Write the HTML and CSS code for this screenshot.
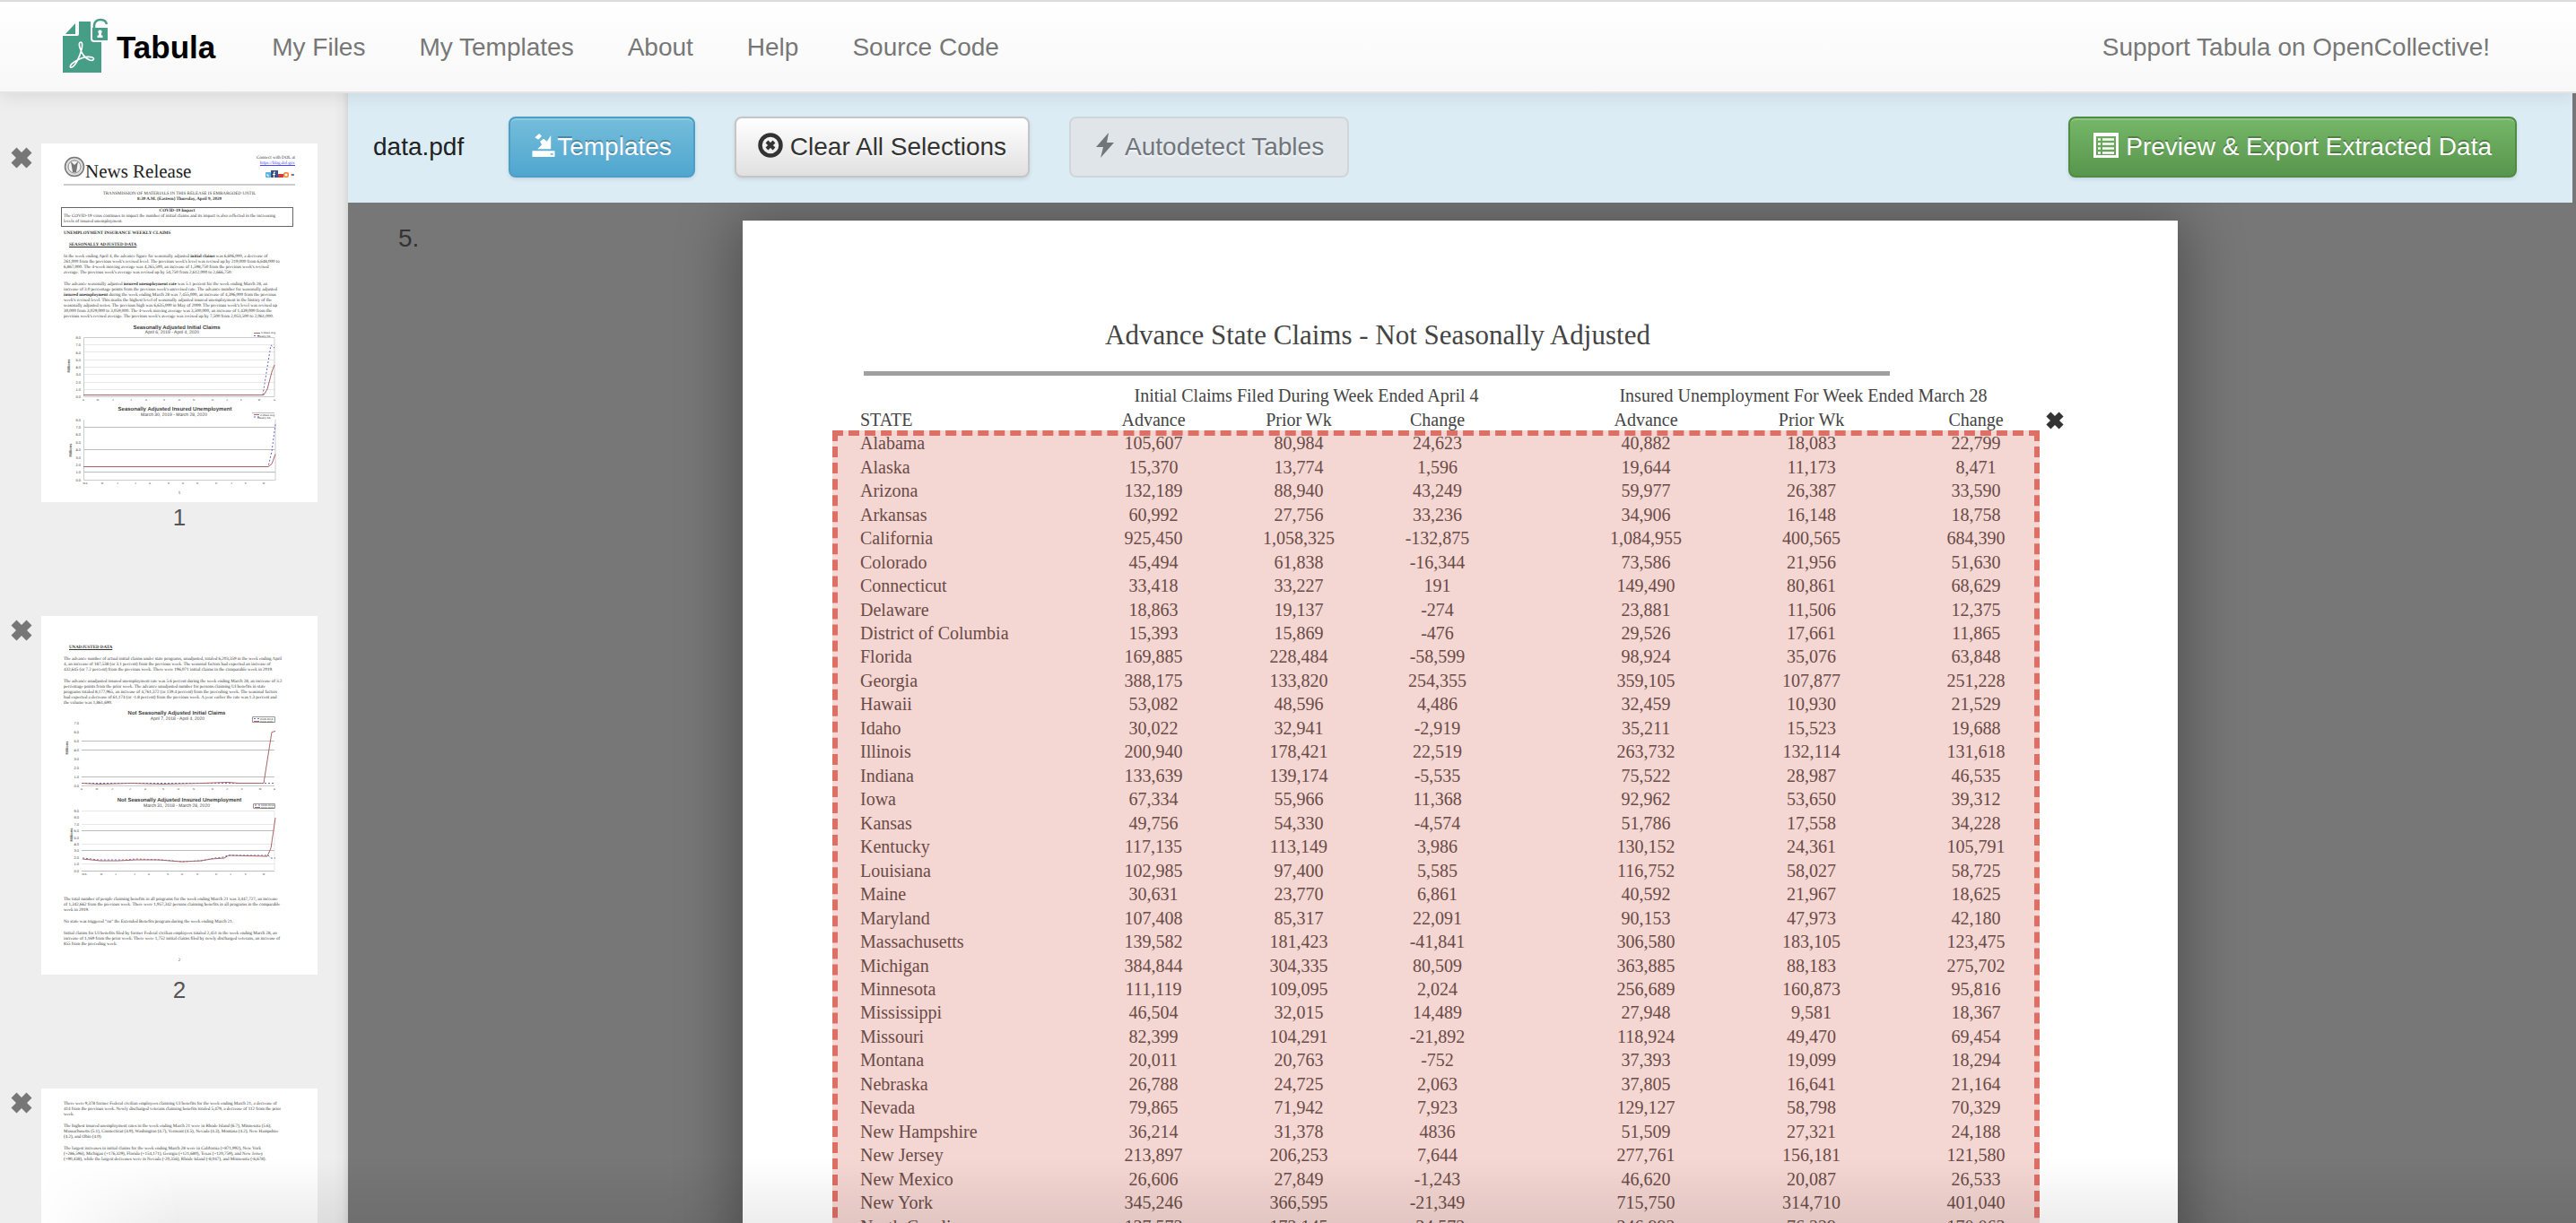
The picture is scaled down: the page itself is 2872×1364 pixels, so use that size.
FILE: index.html
```html
<!DOCTYPE html>
<html lang="en">
<head>
<meta charset="utf-8">
<title>Tabula - data.pdf</title>
<link rel="stylesheet" href="styles.css">
</head>
<body>
<svg class="defs" aria-hidden="true">
  <symbol id="cross" viewBox="0 0 24 24"><path d="M6.5 .5L12 6l5.500-5.500L23.500 6.500 18 12l5.500 5.500-6 6L12 18l-5.500 5.500-6-6L6 12 .5 6.500z"/></symbol>
</svg>
<header class="navbar">
  <a class="brand" href="#">
    <svg class="logo" viewBox="70 20 52 64" aria-hidden="true">
      <path fill="#479e86" d="M88 25h13v19q0 4 4 4h8v34H70V41h16q2 0 2-2zM84 27v12H73z"/>
      <path fill="#479e86" d="M103 32h17v14h-15q-2 0-2-2z"/>
      <path fill="none" stroke="#479e86" stroke-width="2.500" d="M105 32v-3q1-6 7-6 6 0 7 5"/>
      <path fill="#fff" d="M111.500 34.500a2 2 0 0 1 1.500 3.500v2.500h1.500V43h-6v-2.500h1.500V38a2 2 0 0 1 1.500-3.500zM107 31q1-4 4.500-4 3 0 4.500 2h-6v2z"/>
      <path fill="none" stroke="#fff" stroke-width="1.700" d="M90 48c-2 0-2 3-1 6 2 7 6 12 11 14 4 1.500 6-2 3-3-5-1.500-13 .5-20 5-5 3-6 7-3 6 4-1 9-12 11-20 1-4 1-8-1-8z"/>
    </svg>
    <span>Tabula</span>
  </a>
  <nav class="links">
    <a href="#">My Files</a>
    <a href="#">My Templates</a>
    <a href="#">About</a>
    <a href="#">Help</a>
    <a href="#">Source Code</a>
  </nav>
  <a class="support" href="#">Support Tabula on OpenCollective!</a>
</header>

<div class="workspace">
  <aside class="sidebar">
    <ol class="thumbs">
      <li class="thumb">
        <button class="remove" aria-label="Remove page 1"><svg><use href="#cross"/></svg></button>
        <a class="sheet" href="#page1">
          <div class="masthead">
            <svg class="seal" viewBox="0 0 24 24" aria-hidden="true"><circle cx="12" cy="12" r="10.500" fill="#ddd" stroke="#777" stroke-width="1.500"/><circle cx="12" cy="12" r="7" fill="#f4f4f4" stroke="#888" stroke-width="1"/><path d="M8 6l4 4 4-4-1 6-1 6h-4l-1-6z" fill="#777"/></svg>
            <span class="release">News Release</span>
            <span class="connect">Connect with DOL at<br><u>https://blog.dol.gov</u>
              <svg viewBox="0 0 34 9" aria-hidden="true"><rect x="1" y="2" width="6" height="6" rx="1" fill="#59b4e4"/><path d="M3 4v2h2" stroke="#fff" fill="none"/><rect x="7" y="0" width="8" height="8" fill="#3b5484"/><path d="M12 2h-1.500v6M9 4.500h3" stroke="#fff" fill="none"/><rect x="15" y="4" width="6" height="4" fill="#c9413e"/><rect x="21" y="2" width="6" height="6" rx="2" fill="#f28b3c"/><circle cx="24" cy="5" r="1.500" fill="#fff"/><circle cx="30.500" cy="5" r="1" fill="#e33"/><circle cx="32" cy="5" r="1" fill="#36c"/></svg>
            </span>
          </div>
          <p class="center gap7">TRANSMISSION OF MATERIALS IN THIS RELEASE IS EMBARGOED UNTIL<br><b>8:30 A.M. (Eastern) Thursday, April 9, 2020</b></p>
          <div class="impact"><b>COVID-19 Impact</b>The COVID-19 virus continues to impact the number of initial claims and its impact is also reflected in the increasing<br>levels of insured unemployment.</div>
          <p class="gap5"><b>UNEMPLOYMENT INSURANCE WEEKLY CLAIMS</b></p>
          <p class="gap7 sub"><b>SEASONALLY ADJUSTED DATA</b></p>
          <p class="gap7">In the week ending April 4, the advance figure for seasonally adjusted <b>initial claims</b> was 6,606,000, a decrease of<br>261,000 from the previous week's revised level. The previous week's level was revised up by 219,000 from 6,648,000 to<br>6,867,000. The 4-week moving average was 4,265,500, an increase of 1,598,750 from the previous week's revised<br>average. The previous week's average was revised up by 54,750 from 2,612,000 to 2,666,750.</p>
          <p class="gap7">The advance seasonally adjusted <b>insured unemployment rate</b> was 5.1 percent for the week ending March 28, an<br>increase of 3.0 percentage points from the previous week's unrevised rate. The advance number for seasonally adjusted<br><b>insured unemployment</b> during the week ending March 28 was 7,455,000, an increase of 4,396,000 from the previous<br>week's revised level. This marks the highest level of seasonally adjusted insured unemployment in the history of the<br>seasonally adjusted series. The previous high was 6,635,000 in May of 2009. The previous week's level was revised up<br>30,000 from 3,029,000 to 3,059,000. The 4-week moving average was 3,500,000, an increase of 1,439,000 from the<br>previous week's revised average. The previous week's average was revised up by 7,500 from 2,053,500 to 2,061,000.</p>
          <svg class="charts" viewBox="46 357 308 186">
            <text class="t" x="197" y="367">Seasonally Adjusted Initial Claims</text>
            <text class="s" x="192" y="372">April 6, 2019 - April 4, 2020</text>
            <path class="faint" d="M93 384.500h213M93 392.500h213M93 401.500h213M93 409.500h213M93 417.500h213M93 426.500h213M93 434.500h213"/>
            <path class="axis" d="M93.500 442.500V376.500H306V442.500z"/>
            <g class="n"><text x="90" y="378">8.0</text><text x="90" y="386">7.0</text><text x="90" y="395">6.0</text><text x="90" y="403">5.0</text><text x="90" y="411">4.0</text><text x="90" y="419">3.0</text><text x="90" y="428">2.0</text><text x="90" y="436">1.0</text><text x="90" y="444">0.0</text></g>
            <text class="m" x="78" y="408" transform="rotate(-90 78 408)">Millions</text>
            <g class="x"><text x="93" y="447">A</text><text x="109" y="447">M</text><text x="126" y="447">J</text><text x="146" y="447">J</text><text x="163" y="447">A</text><text x="183" y="447">S</text><text x="200" y="447">O</text><text x="216" y="447">N</text><text x="237" y="447">D</text><text x="253" y="447">J</text><text x="269" y="447">F</text><text x="289" y="447">M</text><text x="306" y="447">A</text></g>
            <path class="blue" d="M93 440.500H293L302 385l4 3"/><path class="red" d="M93 440.500H294L298 434 303 415 306 407"/>
            <path class="red" d="M283 371.500h7"/><path class="blue" d="M283 374.500h7"/><text class="l" x="291" y="372">4-Week Avg</text><text class="l" x="287" y="376">Weekly SA</text>
            <text class="t" x="195" y="458">Seasonally Adjusted Insured Unemployment</text>
            <text class="s" x="194" y="464">March 30, 2019 - March 28, 2020</text>
            <path class="strong" d="M93 476.500h214M93 501.500h214M93 526.500h214"/>
            <path class="axis" d="M93.500 468v67.500H307V468"/>
            <g class="n"><text x="90" y="470">8.0</text><text x="90" y="478">7.0</text><text x="90" y="486">6.0</text><text x="90" y="495">5.0</text><text x="90" y="503">4.0</text><text x="90" y="512">3.0</text><text x="90" y="520">2.0</text><text x="90" y="528">1.0</text><text x="90" y="537">0.0</text></g>
            <text class="m" x="80" y="502" transform="rotate(-90 80 502)">Millions</text>
            <g class="x"><text x="95" y="540">M A</text><text x="114" y="540">M</text><text x="131" y="540">J</text><text x="151" y="540">J</text><text x="167" y="540">A</text><text x="188" y="540">S</text><text x="204" y="540">O</text><text x="220" y="540">N</text><text x="241" y="540">D</text><text x="258" y="540">J</text><text x="274" y="540">F</text><text x="294" y="540">M</text></g>
            <path class="blue" d="M93 520.500H299l4-17 4-30"/><path class="red" d="M93 520.500H299l4-3 4-11"/>
            <path class="strong" d="M281 460.500h25"/><path class="red" d="M283 462.500h6"/><path class="blue" d="M283 465h6"/><text class="l" x="290" y="464">4-Week Avg</text><text class="l" x="287" y="467">Weekly SA</text>
          </svg>
          <p class="center gap5">1</p>
        </a>
        <span class="number">1</span>
      </li>
      <li class="thumb">
        <button class="remove" aria-label="Remove page 2"><svg><use href="#cross"/></svg></button>
        <a class="sheet second" href="#page2">
          <p class="sub"><b>UNADJUSTED DATA</b></p>
          <p class="gap7">The advance number of actual initial claims under state programs, unadjusted, totaled 6,203,359 in the week ending April<br>4, an increase of 187,538 (or 3.1 percent) from the previous week. The seasonal factors had expected an increase of<br>432,645 (or 7.2 percent) from the previous week. There were 196,071 initial claims in the comparable week in 2019.</p>
          <p class="gap7">The advance unadjusted insured unemployment rate was 5.6 percent during the week ending March 28, an increase of 3.2<br>percentage points from the prior week. The advance unadjusted number for persons claiming UI benefits in state<br>programs totaled 8,177,965, an increase of 4,761,372 (or 139.4 percent) from the preceding week. The seasonal factors<br>had expected a decrease of 61,174 (or -1.8 percent) from the previous week. A year earlier the rate was 1.3 percent and<br>the volume was 1,861,690.</p>
          <svg class="charts" viewBox="46 787 308 206">
            <text class="t" x="197" y="796">Not Seasonally Adjusted Initial Claims</text>
            <text class="s" x="198" y="802">April 7, 2018 - April 4, 2020</text>
            <path class="strong" d="M91 825.500h215M91 835.500h215M91 865.500h215"/><path class="axis" d="M91 875.500h215"/>
            <g class="n"><text x="88" y="807">7.0</text><text x="88" y="817">6.0</text><text x="88" y="827">5.0</text><text x="88" y="837">4.0</text><text x="88" y="847">3.0</text><text x="88" y="857">2.0</text><text x="88" y="867">1.0</text><text x="88" y="877">0.0</text></g>
            <text class="m" x="76" y="833" transform="rotate(-90 76 833)">Millions</text>
            <g class="x"><text x="91" y="880">A</text><text x="108" y="880">M</text><text x="125" y="880">J</text><text x="145" y="880">J</text><text x="162" y="880">A</text><text x="182" y="880">S</text><text x="199" y="880">O</text><text x="216" y="880">N</text><text x="237" y="880">D</text><text x="253" y="880">J</text><text x="270" y="880">F</text><text x="290" y="880">M</text><text x="306" y="880">A</text></g>
            <path class="blue" d="M91 872.500H306"/><path class="red" d="M91 872.500l20 1 35-1 35 1 45-1 28-1 12 1h28l9-57 4-1"/>
            <path class="box" d="M281.500 798.500h25v6h-25z"/><path class="blue" d="M283 800.500h6"/><path class="red" d="M283 803.500h6"/><text class="l" x="290" y="802">2018-2019</text><text class="l" x="290" y="805">2019-2020</text>
            <text class="t" x="200" y="893">Not Seasonally Adjusted Insured Unemployment</text>
            <text class="s" x="197" y="899">March 31, 2018 - March 28, 2020</text>
            <path class="strong" d="M91 925.500h215M91 947.500h215M91 970.500h215"/><path class="faint" d="M91 903.500h215v66M91 918.500h215M91 940.500h215M91 962.500h215"/>
            <g class="n"><text x="88" y="905">9.0</text><text x="88" y="912">8.0</text><text x="88" y="920">7.0</text><text x="88" y="927">6.0</text><text x="88" y="935">5.0</text><text x="88" y="942">4.0</text><text x="88" y="949">3.0</text><text x="88" y="957">2.0</text><text x="88" y="964">1.0</text><text x="88" y="972">0.0</text></g>
            <text class="m" x="81" y="930" transform="rotate(-90 81 930)">Millions</text>
            <g class="x"><text x="94" y="975">M A</text><text x="113" y="975">M</text><text x="129" y="975">J</text><text x="150" y="975">J</text><text x="166" y="975">A</text><text x="187" y="975">S</text><text x="203" y="975">O</text><text x="220" y="975">N</text><text x="241" y="975">D</text><text x="257" y="975">J</text><text x="274" y="975">F</text><text x="294" y="975">M</text></g>
            <path class="blue" d="M92 956l18 2 30 0 12-1 28 1 24 2 20-1 15-3 10-1 5-2h45l3 3h5"/><path class="red" d="M92 957l20 2 20 0 20-1 25 0 25 2 22-1 12-2 14-1 5-3 43 1 4-9 3-20 2-14"/>
            <path class="box" d="M282.500 895.500h24v5h-24z"/><path class="blue" d="M284 897h6"/><path class="red" d="M284 899.500h6"/><text class="l" x="291" y="898">2018-2019</text><text class="l" x="291" y="901">2019-2020</text>
          </svg>
          <p class="gap7">The total number of people claiming benefits in all programs for the week ending March 21 was 3,447,727, an increase<br>of 1,342,662 from the previous week. There were 1,957,342 persons claiming benefits in all programs in the comparable<br>week in 2019.</p>
          <p class="gap7">No state was triggered "on" the Extended Benefits program during the week ending March 21.</p>
          <p class="gap7">Initial claims for UI benefits filed by former Federal civilian employees totaled 2,451 in the week ending March 28, an<br>increase of 1,169 from the prior week. There were 1,752 initial claims filed by newly discharged veterans, an increase of<br>855 from the preceding week.</p>
          <p class="center gap12">2</p>
        </a>
        <span class="number">2</span>
      </li>
      <li class="thumb">
        <button class="remove" aria-label="Remove page 3"><svg><use href="#cross"/></svg></button>
        <a class="sheet third" href="#page3">
          <p>There were 9,378 former Federal civilian employees claiming UI benefits for the week ending March 21, a decrease of<br>414 from the previous week. Newly discharged veterans claiming benefits totaled 5,479, a decrease of 112 from the prior<br>week.</p>
          <p class="gap7">The highest insured unemployment rates in the week ending March 21 were in Rhode Island (6.7), Minnesota (5.6),<br>Massachusetts (5.1), Connecticut (4.9), Washington (4.7), Vermont (4.5), Nevada (4.3), Montana (4.2), New Hampshire<br>(4.2), and Ohio (4.0).</p>
          <p class="gap7">The largest increases in initial claims for the week ending March 28 were in California (+871,992), New York<br>(+286,596), Michigan (+176,329), Florida (+154,171), Georgia (+121,680), Texas (+120,759), and New Jersey<br>(+90,438), while the largest decreases were in Nevada (-20,356), Rhode Island (-8,047), and Minnesota (-6,678).</p>
        </a>
      </li>
    </ol>
  </aside>

  <main class="viewer">
    <div class="toolbar">
      <span class="filename">data.pdf</span>
      <button class="btn info"><svg class="tray" viewBox="0 0 26 29" aria-hidden="true"><path d="M0 21h26v7H0zM21.500 3v16H6l5-5-2-4 4-3 4 3zM3 5.500L8 1l3 3-4 4z" fill="currentColor"/><path d="M21 24h3v1.500h-3z" fill="#5aafd3"/></svg>Templates</button>
      <button class="btn"><svg class="ring" viewBox="0 0 28 28" aria-hidden="true"><circle cx="14" cy="14" r="11.500" fill="none" stroke="currentColor" stroke-width="4.500"/><path d="M10 10l8 8M18 10l-8 8" stroke="currentColor" stroke-width="4"/></svg>Clear All Selections</button>
      <button class="btn disabled" disabled><svg class="bolt" viewBox="0 0 20 28" aria-hidden="true"><path d="M14 0L0 16h8L5 28 20 11h-8z" fill="currentColor"/></svg>Autodetect Tables</button>
      <button class="btn success"><svg class="list" viewBox="0 0 28 28" aria-hidden="true"><path d="M0 0h28v28H0zM3 4v21h22V4z" fill="currentColor" fill-rule="evenodd"/><path d="M5 7.500h3M5 12.500h3M5 17.500h3M5 22.500h3M10 7.500h13M10 12.500h13M10 17.500h13M10 22.500h13" stroke="currentColor" stroke-width="2.500"/></svg>Preview &amp; Export Extracted Data</button>
    </div>
    <div class="canvas">
      <span class="pagenum">5.</span>
      <article class="page">
        <h1>Advance State Claims - Not Seasonally Adjusted</h1>
        <hr>
        <table class="claims">
          <colgroup><col class="c-state"><col class="c-a"><col class="c-b"><col class="c-c"><col class="c-gap"><col class="c-d"><col class="c-e"><col class="c-f"></colgroup>
          <thead>
            <tr class="groups"><td></td><th class="group-a" colspan="3">Initial Claims Filed During Week Ended April 4</th><td></td><th class="group-b" colspan="3">Insured Unemployment For Week Ended March 28</th></tr>
            <tr class="heads"><th class="state">STATE</th><th>Advance</th><th>Prior Wk</th><th>Change</th><td></td><th>Advance</th><th>Prior Wk</th><th>Change</th></tr>
          </thead>
          <tbody>
            <tr><td>Alabama</td><td>105,607</td><td>80,984</td><td>24,623</td><td></td><td>40,882</td><td>18,083</td><td>22,799</td></tr>
            <tr><td>Alaska</td><td>15,370</td><td>13,774</td><td>1,596</td><td></td><td>19,644</td><td>11,173</td><td>8,471</td></tr>
            <tr><td>Arizona</td><td>132,189</td><td>88,940</td><td>43,249</td><td></td><td>59,977</td><td>26,387</td><td>33,590</td></tr>
            <tr><td>Arkansas</td><td>60,992</td><td>27,756</td><td>33,236</td><td></td><td>34,906</td><td>16,148</td><td>18,758</td></tr>
            <tr><td>California</td><td>925,450</td><td>1,058,325</td><td>-132,875</td><td></td><td>1,084,955</td><td>400,565</td><td>684,390</td></tr>
            <tr><td>Colorado</td><td>45,494</td><td>61,838</td><td>-16,344</td><td></td><td>73,586</td><td>21,956</td><td>51,630</td></tr>
            <tr><td>Connecticut</td><td>33,418</td><td>33,227</td><td>191</td><td></td><td>149,490</td><td>80,861</td><td>68,629</td></tr>
            <tr><td>Delaware</td><td>18,863</td><td>19,137</td><td>-274</td><td></td><td>23,881</td><td>11,506</td><td>12,375</td></tr>
            <tr><td>District of Columbia</td><td>15,393</td><td>15,869</td><td>-476</td><td></td><td>29,526</td><td>17,661</td><td>11,865</td></tr>
            <tr><td>Florida</td><td>169,885</td><td>228,484</td><td>-58,599</td><td></td><td>98,924</td><td>35,076</td><td>63,848</td></tr>
            <tr><td>Georgia</td><td>388,175</td><td>133,820</td><td>254,355</td><td></td><td>359,105</td><td>107,877</td><td>251,228</td></tr>
            <tr><td>Hawaii</td><td>53,082</td><td>48,596</td><td>4,486</td><td></td><td>32,459</td><td>10,930</td><td>21,529</td></tr>
            <tr><td>Idaho</td><td>30,022</td><td>32,941</td><td>-2,919</td><td></td><td>35,211</td><td>15,523</td><td>19,688</td></tr>
            <tr><td>Illinois</td><td>200,940</td><td>178,421</td><td>22,519</td><td></td><td>263,732</td><td>132,114</td><td>131,618</td></tr>
            <tr><td>Indiana</td><td>133,639</td><td>139,174</td><td>-5,535</td><td></td><td>75,522</td><td>28,987</td><td>46,535</td></tr>
            <tr><td>Iowa</td><td>67,334</td><td>55,966</td><td>11,368</td><td></td><td>92,962</td><td>53,650</td><td>39,312</td></tr>
            <tr><td>Kansas</td><td>49,756</td><td>54,330</td><td>-4,574</td><td></td><td>51,786</td><td>17,558</td><td>34,228</td></tr>
            <tr><td>Kentucky</td><td>117,135</td><td>113,149</td><td>3,986</td><td></td><td>130,152</td><td>24,361</td><td>105,791</td></tr>
            <tr><td>Louisiana</td><td>102,985</td><td>97,400</td><td>5,585</td><td></td><td>116,752</td><td>58,027</td><td>58,725</td></tr>
            <tr><td>Maine</td><td>30,631</td><td>23,770</td><td>6,861</td><td></td><td>40,592</td><td>21,967</td><td>18,625</td></tr>
            <tr><td>Maryland</td><td>107,408</td><td>85,317</td><td>22,091</td><td></td><td>90,153</td><td>47,973</td><td>42,180</td></tr>
            <tr><td>Massachusetts</td><td>139,582</td><td>181,423</td><td>-41,841</td><td></td><td>306,580</td><td>183,105</td><td>123,475</td></tr>
            <tr><td>Michigan</td><td>384,844</td><td>304,335</td><td>80,509</td><td></td><td>363,885</td><td>88,183</td><td>275,702</td></tr>
            <tr><td>Minnesota</td><td>111,119</td><td>109,095</td><td>2,024</td><td></td><td>256,689</td><td>160,873</td><td>95,816</td></tr>
            <tr><td>Mississippi</td><td>46,504</td><td>32,015</td><td>14,489</td><td></td><td>27,948</td><td>9,581</td><td>18,367</td></tr>
            <tr><td>Missouri</td><td>82,399</td><td>104,291</td><td>-21,892</td><td></td><td>118,924</td><td>49,470</td><td>69,454</td></tr>
            <tr><td>Montana</td><td>20,011</td><td>20,763</td><td>-752</td><td></td><td>37,393</td><td>19,099</td><td>18,294</td></tr>
            <tr><td>Nebraska</td><td>26,788</td><td>24,725</td><td>2,063</td><td></td><td>37,805</td><td>16,641</td><td>21,164</td></tr>
            <tr><td>Nevada</td><td>79,865</td><td>71,942</td><td>7,923</td><td></td><td>129,127</td><td>58,798</td><td>70,329</td></tr>
            <tr><td>New Hampshire</td><td>36,214</td><td>31,378</td><td>4836</td><td></td><td>51,509</td><td>27,321</td><td>24,188</td></tr>
            <tr><td>New Jersey</td><td>213,897</td><td>206,253</td><td>7,644</td><td></td><td>277,761</td><td>156,181</td><td>121,580</td></tr>
            <tr><td>New Mexico</td><td>26,606</td><td>27,849</td><td>-1,243</td><td></td><td>46,620</td><td>20,087</td><td>26,533</td></tr>
            <tr><td>New York</td><td>345,246</td><td>366,595</td><td>-21,349</td><td></td><td>715,750</td><td>314,710</td><td>401,040</td></tr>
            <tr><td>North Carolina</td><td>137,573</td><td>172,145</td><td>-34,572</td><td></td><td>246,992</td><td>76,229</td><td>170,063</td></tr>
          </tbody>
        </table>
        <div class="selection"><button class="close" aria-label="Remove selection"><svg><use href="#cross"/></svg></button></div>
      </article>
    </div>
  </main>
</div>
<div class="fade"></div>
</body>
</html>
```
FILE: styles.css
```css
* { box-sizing: border-box; }

body {
  margin: 0;
  height: 100vh;
  display: flex;
  flex-direction: column;
  overflow: hidden;
  background: #777;
  color: #333;
  font: 28px/40px "Liberation Sans", Arial, sans-serif;
}

a { color: inherit; text-decoration: none; }
button { font: inherit; color: inherit; border: 0; background: none; padding: 0; cursor: pointer; }
.defs { display: none; }

/* top navigation */
.navbar {
  flex: none;
  height: 104px;
  display: flex;
  align-items: center;
  padding: 2px 96px 0 70px;
  color: #777;
  background: linear-gradient(#fff, #f8f8f8);
  border-top: 2px solid #dcdce1;
  border-bottom: 2px solid #e4e4e4;
  box-shadow: 0 2px 20px rgba(0, 0, 0, .1);
  position: relative;
  z-index: 2;
}
.brand {
  display: flex;
  align-items: center;
  gap: 8px;
  color: #000;
  font-size: 35px;
  font-weight: bold;
}
.logo { width: 52px; height: 64px; margin-bottom: 4px; }
.links { display: flex; gap: 60px; margin-left: 63px; }
.support { margin-left: auto; }

.workspace { flex: 1; min-height: 0; display: flex; }

/* page thumbnails */
.sidebar {
  flex: none;
  width: 388px;
  padding-top: 56px;
  overflow: hidden;
  background: linear-gradient(to left, #d8d8d8, #e8e8e8 6px, #eee 16px);
}
.thumbs { list-style: none; margin: 0; padding: 0 0 0 12px; }
.thumb {
  display: grid;
  grid-template-columns: 34px 308px;
  grid-template-rows: 400px 127px;
}
.remove { align-self: start; width: 24px; height: 24px; margin-top: 4px; }
.remove svg { display: block; width: 24px; height: 24px; fill: #777; }
.number { grid-column: 2; text-align: center; font-size: 26px; line-height: 34px; color: #555; }
.sheet {
  display: block;
  height: 400px;
  padding: 0 25px;
  overflow: hidden;
  background: #fff;
  color: #333;
  font: 5px/6px "Liberation Serif", "Times New Roman", serif;
  text-rendering: geometricPrecision;
  white-space: nowrap;
}
.sheet p { margin: 0; }
.second { padding-top: 33px; }
.third { padding-top: 15px; }
.sheet .gap5 { margin-top: 5px; }
.sheet .gap7 { margin-top: 7px; }
.sheet .gap12 { margin-top: 12px; }
.center { text-align: center; }
.sheet .sub { padding-left: 6px; text-decoration: underline; }
.masthead {
  display: flex;
  align-items: flex-start;
  height: 47px;
  padding-top: 14px;
  border-bottom: 2px solid #ccc;
}
.seal { width: 24px; height: 24px; }
.release { font-size: 21px; line-height: 34px; color: #222; }
.connect { margin-left: auto; text-align: right; }
.connect u { color: #44f; }
.connect svg { display: block; width: 34px; height: 9px; margin: 4px 0 0 auto; }
.impact { margin: 5px 2px 0 -3px; padding: 1px 2px; border: 1px solid #666; }
.impact b { display: block; text-align: center; }
.charts { display: block; width: 308px; margin-left: -25px; font-family: "Liberation Sans", Arial, sans-serif; fill: #444; }
.charts .t { font-size: 6px; font-weight: bold; text-anchor: middle; }
.charts .s { font-size: 5px; text-anchor: middle; }
.charts .n { font-size: 4px; text-anchor: end; }
.charts .x { font-size: 3px; text-anchor: middle; }
.charts .l { font-size: 3px; }
.charts .m { font-size: 4px; font-weight: bold; text-anchor: middle; }
.charts path { fill: none; }
.faint { stroke: #e8e8e8; }
.axis { stroke: #ccc; }
.strong { stroke: #bbb; }
.box { stroke: #999; }
.red { stroke: #a66; }
.blue { stroke: #66c; stroke-dasharray: 2 2; }

/* toolbar and document view */
.viewer { flex: 1; min-width: 0; display: flex; flex-direction: column; padding-right: 4px; }
.toolbar {
  flex: none;
  height: 122px;
  display: flex;
  align-items: center;
  gap: 44px;
  padding: 0 62px 2px 28px;
  background: #dcecf5;
  position: relative;
  z-index: 1;
}
.filename { margin-right: 6px; color: #222; }
.btn {
  height: 68px;
  display: flex;
  align-items: center;
  gap: 8px;
  padding: 0 24px;
  border: 2px solid #c5c5c5;
  border-radius: 8px;
  background: linear-gradient(#fff, #e0e0e0);
  box-shadow: inset 0 2px 0 rgba(255, 255, 255, .2), 0 2px 4px rgba(0, 0, 0, .1);
  text-shadow: 0 2px 2px rgba(255, 255, 255, .75);
}
.btn svg { flex: none; height: 28px; position: relative; top: -2px; }
.info, .success { color: #fff; text-shadow: 0 -2px 0 rgba(0, 0, 0, .25); }
.info { gap: 2px; border-color: #4a9fc4; background: linear-gradient(#74bddb, #50a6cf); }
.success { margin-left: auto; padding: 0 26px; border-color: #4d8c43; background: linear-gradient(#75b768, #58954d); }
.disabled { padding: 0 26px 0 28px; gap: 12px; color: #70767b; border-color: #d0d5d8; background: #dfe5e9; box-shadow: none; }
.tray { width: 26px; }
.ring { width: 28px; }
.bolt { width: 20px; }
.list { width: 28px; }

.canvas {
  flex: 1;
  min-height: 0;
  display: flex;
  justify-content: center;
  padding-top: 20px;
  overflow: hidden;
  position: relative;
}
.pagenum { position: absolute; left: 56px; top: 20px; }
.page {
  width: 100%;
  max-width: 1600px;
  min-height: 2070px;
  padding: 109px 133px 0 131px;
  background: #fff;
  box-shadow: 0 8px 60px 10px rgba(0, 0, 0, .32);
  color: #444;
  font: 20px/24px "Liberation Serif", "Times New Roman", serif;
  position: relative;
}
.page h1 { margin: 0; padding-right: 182px; font-size: 31px; font-weight: normal; line-height: 38px; text-align: center; }
.page hr { height: 5px; margin: 21px 188px 0 4px; border: 0; background: #a0a0a0; }
.claims { width: 100%; height: 954px; margin-top: 8px; border-collapse: collapse; table-layout: fixed; }
.claims td, .claims th { padding: 0; font-weight: normal; text-align: center; }
.claims tbody td:first-child, .claims .state { text-align: left; }
.claims .groups { height: 28px; }
.claims .heads { height: 26px; }
.claims .group-a { padding-left: 32px; }
.claims .group-b { padding-right: 16px; }
.c-state { width: 246px; }
.c-a, .c-b { width: 162px; }
.c-c { width: 147px; }
.c-gap { width: 66px; }
.c-d { width: 186px; }
.c-e { width: 183px; }
.c-f { width: 184px; }

.selection {
  position: absolute;
  left: 100px;
  right: 154px;
  top: 234px;
  bottom: 200px;
  border: 6px dashed #de6f65;
  background: rgba(213, 98, 82, .26);
}
.close { position: absolute; right: -33px; top: -27px; width: 20px; height: 20px; }
.close svg { display: block; width: 20px; height: 20px; fill: #333; }

.fade {
  position: fixed;
  left: 40px;
  right: 0;
  bottom: 0;
  height: 72px;
  background: linear-gradient(transparent, rgba(0, 0, 0, .07));
  -webkit-mask-image: linear-gradient(to right, transparent, #000 160px);
  mask-image: linear-gradient(to right, transparent, #000 160px);
  pointer-events: none;
}
```
